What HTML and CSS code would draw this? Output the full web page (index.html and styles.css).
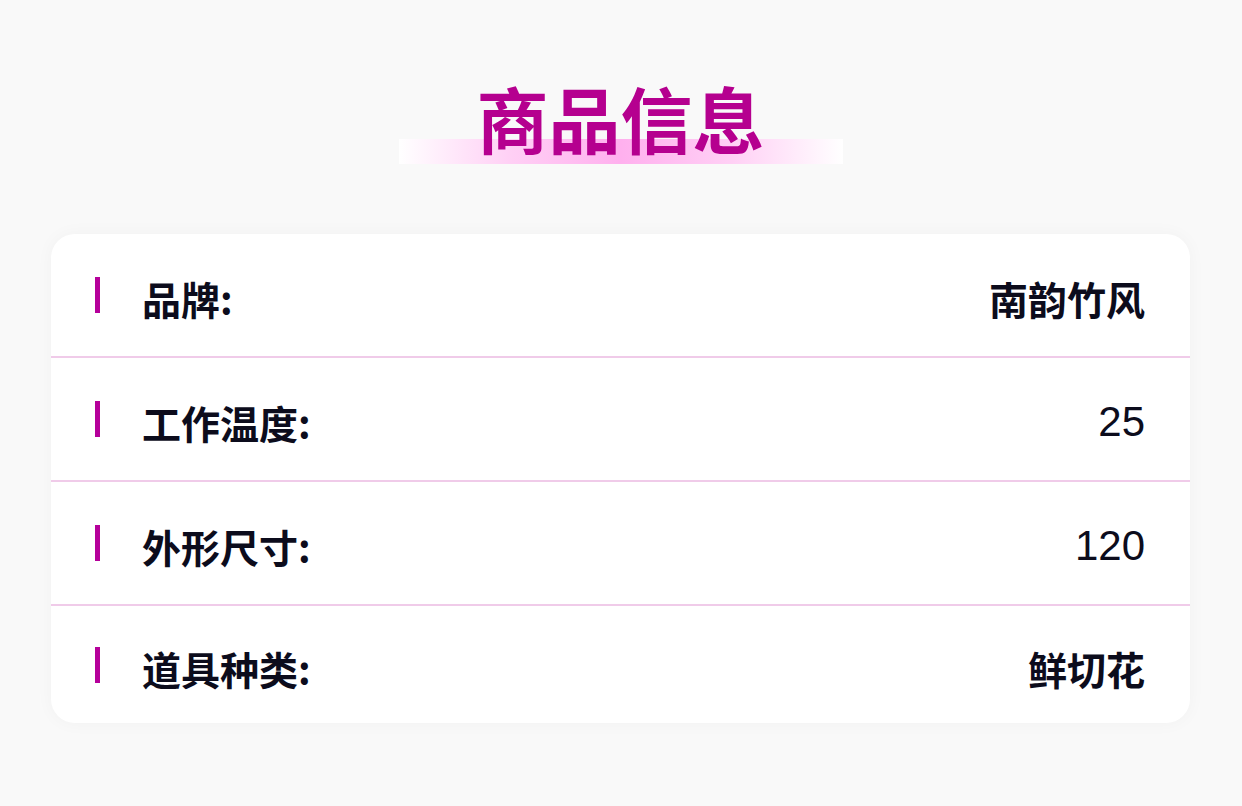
FILE: index.html
```html
<!DOCTYPE html>
<html lang="zh-CN">
<head>
<meta charset="utf-8">
<title>商品信息</title>
<link rel="stylesheet" href="styles.css">
</head>
<body>
<div class="page">
  <header class="head">
    <h1 class="title">商品信息</h1>
  </header>
  <section class="card">
    <div class="row">
      <span class="mark"></span>
      <span class="label">品牌:</span>
      <span class="value">南韵竹风</span>
    </div>
    <div class="row">
      <span class="mark"></span>
      <span class="label">工作温度:</span>
      <span class="value num">25</span>
    </div>
    <div class="row">
      <span class="mark"></span>
      <span class="label">外形尺寸:</span>
      <span class="value num">120</span>
    </div>
    <div class="row">
      <span class="mark"></span>
      <span class="label">道具种类:</span>
      <span class="value">鲜切花</span>
    </div>
  </section>
</div>
</body>
</html>
```
FILE: styles.css
```css
* { box-sizing: border-box; }
html, body { margin: 0; padding: 0; }
body {
  background: #f9f9f9;
  font-family: "Liberation Sans", "Noto Sans CJK SC", sans-serif;
  color: #0c0c1c;
  width: 1242px;
  height: 806px;
  overflow: hidden;
}
.page {
  padding: 72px 52px 0 51px;
}
.head {
  display: flex;
  justify-content: center;
}
.title {
  margin: 0;
  width: 444px;
  height: 92px;
  padding-top: 9px;
  text-align: center;
  font-family: "Noto Sans CJK SC", sans-serif;
  font-size: 72px;
  line-height: 72px;
  font-weight: 700;
  color: #b5008f;
  background-image: linear-gradient(90deg, #ffffff 0%, #ffd0f5 25%, #ffb0ee 50%, #ffd0f5 75%, #ffffff 100%);
  background-repeat: no-repeat;
  background-size: 100% 25px;
  background-position: left bottom;
}
.card {
  margin-top: 70px;
  background: #ffffff;
  border-radius: 24px;
  box-shadow: 0 0 18px rgba(0, 0, 0, 0.035);
  overflow: hidden;
}
.row {
  height: 124px;
  display: flex;
  align-items: center;
  padding: 6px 45px 0 44px;
  border-bottom: 2px solid #f0cbe9;
}
.row:last-child {
  height: 117px;
  border-bottom: none;
}
.mark {
  width: 5px;
  height: 36px;
  background: #b5009a;
  flex: none;
  margin-top: -6px;
}
.label {
  margin-left: 42px;
  font-family: "Noto Sans CJK SC", sans-serif;
  font-size: 39px;
  font-weight: 700;
  flex: 1;
}
.value {
  font-family: "Noto Sans CJK SC", sans-serif;
  font-size: 39px;
  font-weight: 700;
  text-align: right;
}
.value.num {
  font-family: "Liberation Sans", sans-serif;
  font-size: 42px;
  font-weight: 400;
}
```
